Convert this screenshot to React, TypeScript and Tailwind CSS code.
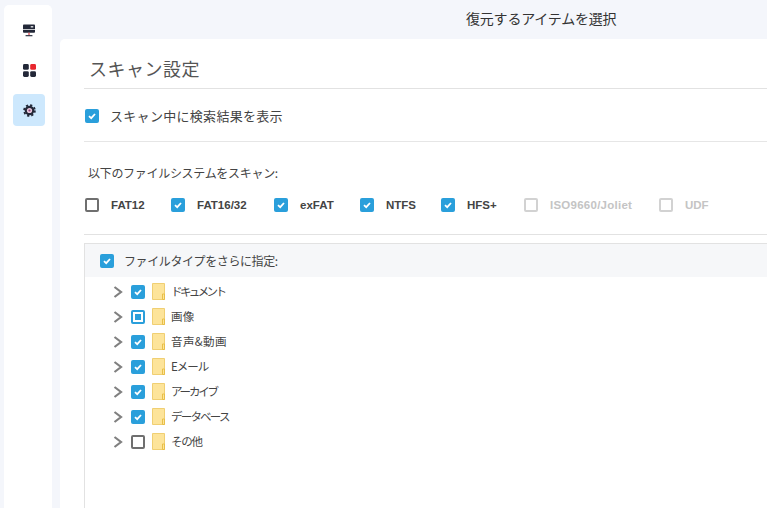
const JP = "font-['Noto_Sans_CJK_JP','Liberation_Sans',sans-serif]"

function Check({ state = 'on', size = 'w-[14px] h-[14px]' }: { state?: 'on' | 'off' | 'mixed' | 'disabled'; size?: string }) {
  if (state === 'on') {
    return (
      <span className={`${size} shrink-0 rounded-[2px] bg-[#2a9fdb] flex items-center justify-center`}>
        <svg className="w-[10px] h-[10px]" viewBox="0 0 10 10" fill="none" stroke="#fff" strokeWidth={1.8}>
          <path d="M2 5.2 L4.2 7.2 L8 3" />
        </svg>
      </span>
    )
  }
  if (state === 'mixed') {
    return (
      <span className={`${size} shrink-0 rounded-[2px] border-2 border-[#2a9fdb] bg-white flex items-center justify-center`}>
        <span className="w-[6px] h-[6px] bg-[#2a9fdb]" />
      </span>
    )
  }
  if (state === 'disabled') {
    return <span className={`${size} block shrink-0 rounded-[2px] border-2 border-[#d2d2d2] bg-white`} />
  }
  return <span className={`${size} block shrink-0 rounded-[2px] border-2 border-[#6f6f6f] bg-white`} />
}

function Folder() {
  return (
    <svg className="w-[13px] h-[17px] shrink-0" viewBox="0 0 13 17">
      <path d="M0.5 0.5 H12.5 V16.5 H0.5 Z" fill="#fde49a" stroke="#f0cf72" />
      <path d="M10.5 16.5 V11 H12.5 V16.5 Z" fill="#fde49a" stroke="#e8bf48" />
    </svg>
  )
}

function Chevron() {
  return (
    <svg className="w-[10px] h-[12px] shrink-0" viewBox="0 0 10 12" fill="none" stroke="#808080" strokeWidth={2.2}>
      <path d="M1.5 1 L8 6 L1.5 11" />
    </svg>
  )
}

const systems: { name: string; state: 'on' | 'off' | 'disabled'; width: string; text: string }[] = [
  { name: 'FAT12', state: 'off', width: 'w-[86px]', text: '' },
  { name: 'FAT16/32', state: 'on', width: 'w-[103px]', text: '' },
  { name: 'exFAT', state: 'on', width: 'w-[86px]', text: '' },
  { name: 'NTFS', state: 'on', width: 'w-[81px]', text: '' },
  { name: 'HFS+', state: 'on', width: 'w-[83px]', text: '' },
  { name: 'ISO9660/Joliet', state: 'disabled', width: 'w-[135px]', text: 'tracking-[0.25px]' },
  { name: 'UDF', state: 'disabled', width: 'w-[60px]', text: '' },
]

const types: { name: string; state: 'on' | 'off' | 'mixed'; text: string }[] = [
  { name: 'ドキュメント', state: 'on', text: 'tracking-[-2.6px]' },
  { name: '画像', state: 'mixed', text: 'tracking-[0.3px]' },
  { name: '音声&動画', state: 'on', text: 'tracking-[0.4px]' },
  { name: 'Eメール', state: 'on', text: 'tracking-[-1px]' },
  { name: 'アーカイブ', state: 'on', text: 'tracking-[-2.2px]' },
  { name: 'データベース', state: 'on', text: 'tracking-[-1.8px]' },
  { name: 'その他', state: 'off', text: 'tracking-[-1.3px]' },
]

export default function App() {
  return (
    <div className={`h-[508px] w-[767px] overflow-hidden bg-[#f4f6fb] flex pl-[4px] pt-[5px] ${JP}`}>
      {/* Sidebar */}
      <aside className="w-[48px] shrink-0 bg-white rounded-t-[5px] flex flex-col items-center pt-[9px] pl-[2px]">
        <div className="w-[32px] h-[32px] flex items-center justify-center">
          <svg width="12" height="13" viewBox="0 0 14 14">
            <path d="M1 0 H13 Q14 0 14 1 V5.5 H0 V1 Q0 0 1 0 Z" fill="#232838" />
            <path d="M0 6.5 H14 V8.5 Q14 9.5 13 9.5 H1 Q0 9.5 0 8.5 Z" fill="#232838" />
            <rect x="9" y="2" width="3" height="1.4" fill="#fff" />
            <rect x="6.2" y="9.5" width="1.6" height="3" fill="#e0575f" />
            <rect x="3" y="12.4" width="8" height="1.3" fill="#232838" />
          </svg>
        </div>
        <div className="w-[32px] h-[32px] mt-[8px] flex items-center justify-center">
          <svg width="13" height="13" viewBox="0 0 13 13">
            <rect x="0" y="0" width="5.8" height="5.8" rx="1.4" fill="#232838" />
            <rect x="7.2" y="0" width="5.8" height="5.8" rx="1.4" fill="#e8262e" />
            <rect x="0" y="7.2" width="5.8" height="5.8" rx="1.4" fill="#232838" />
            <rect x="7.2" y="7.2" width="5.8" height="5.8" rx="1.4" fill="#232838" />
          </svg>
        </div>
        <div className="w-[32px] h-[32px] mt-[8px] rounded-[4px] bg-[#cde8fd] flex items-center justify-center">
          <svg width="13" height="13" viewBox="0 0 13 13">
            <circle cx="6.5" cy="6.5" r="4.8" fill="#232838" />
            <circle cx="6.5" cy="6.5" r="5.4" fill="none" stroke="#232838" strokeWidth="1.8" strokeDasharray="2.2 2.04" />
            <circle cx="6.5" cy="6.5" r="2.6" fill="#e9c9dc" />
            <circle cx="6.5" cy="6.5" r="1.1" fill="#8a3f78" />
          </svg>
        </div>
      </aside>

      <div className="flex-1 min-w-0 pl-[8px] flex flex-col">
        {/* Top title */}
        <div className="h-[34px] shrink-0 pl-[406px] pt-[2px] text-[14px] leading-[22px] tracking-[-0.2px] text-[#333333] whitespace-nowrap">
          復元するアイテムを選択
        </div>

        {/* Main card */}
        <main className="flex-1 bg-white rounded-tl-[5px] pl-[24px] overflow-hidden">
          <h1 className="h-[50px] pl-[5px] pt-[15px] text-[18px] leading-[28px] tracking-[0.5px] text-[#555555] border-b border-[#e2e2e2]">
            スキャン設定
          </h1>

          <label className="h-[53px] flex items-center gap-[11px] pl-[1px] pt-[2px] border-b border-[#e6e6e6] text-[13px] tracking-[0.3px] text-[#444444]">
            <Check />
            <span>スキャン中に検索結果を表示</span>
          </label>

          <div className="h-[93px] border-b border-[#e2e2e2]">
            <p className="pl-[4px] pt-[21px] text-[12px] leading-[20px] tracking-[-0.3px] text-[#444444] whitespace-nowrap">
              以下のファイルシステムをスキャン:
            </p>
            <div className="mt-[15px] pl-[1px] flex items-center">
              {systems.map((s) => (
                <label key={s.name} className={`${s.width} shrink-0 flex items-center gap-[12px]`}>
                  <Check state={s.state} />
                  <span
                    className={`font-['Liberation_Sans',sans-serif] text-[11.5px] font-bold leading-[14px] whitespace-nowrap ${s.text} ${
                      s.state === 'disabled' ? 'text-[#c4c4c4]' : 'text-[#444444]'
                    }`}
                  >
                    {s.name}
                  </span>
                </label>
              ))}
            </div>
          </div>

          {/* File type tree */}
          <section className="mt-[8px] h-[300px] border-l border-t border-[#e2e2e2]">
            <div className="h-[33px] bg-[#f6f7f9] flex items-center gap-[10px] pl-[15px] text-[12px] tracking-[-0.4px] text-[#444444]">
              <Check />
              <span>ファイルタイプをさらに指定:</span>
            </div>
            <ul className="pt-[2px]">
              {types.map((t) => (
                <li key={t.name} className="h-[25px] flex items-center pl-[28px]">
                  <Chevron />
                  <span className="ml-[8px] flex">
                    <Check state={t.state} />
                  </span>
                  <span className="ml-[7px] flex">
                    <Folder />
                  </span>
                  <span className={`ml-[6px] text-[11.5px] text-[#444444] whitespace-nowrap ${t.text}`}>{t.name}</span>
                </li>
              ))}
            </ul>
          </section>
        </main>
      </div>
    </div>
  )
}
